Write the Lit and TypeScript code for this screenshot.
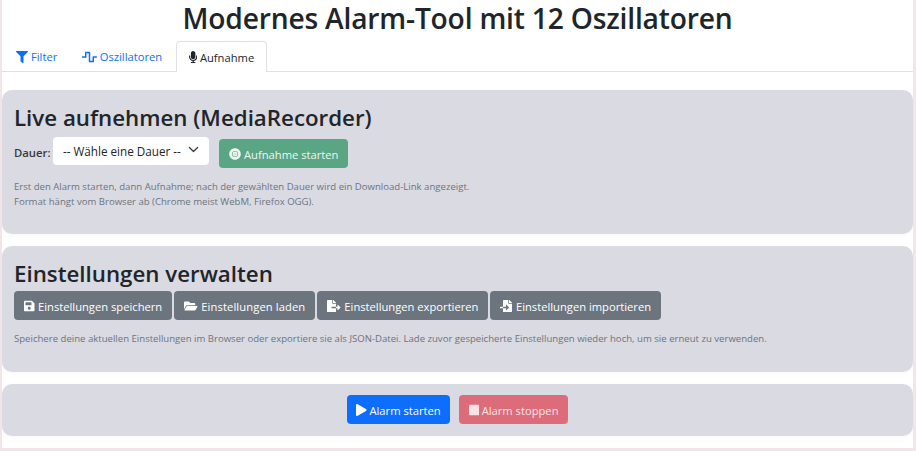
import { LitElement, html, css, svg } from "lit";
import { customElement } from "lit/decorators.js";

const I: Record<string, [number, string]> = {
  filter: [512, "M487.976 0H24.028C2.71 0-8.047 25.866 7.058 40.971L192 225.941V432c0 7.831 3.821 15.17 10.237 19.662l80 55.98C298.02 518.69 320 507.493 320 487.98V225.941l184.947-184.97C520.021 25.896 509.338 0 487.976 0z"],
  wave: [640, "M476 480H324a36 36 0 0 1-36-36V96h-96v156a36 36 0 0 1-36 36H12a12 12 0 0 1-12-12v-40a12 12 0 0 1 12-12h116V68a36 36 0 0 1 36-36h152a36 36 0 0 1 36 36v348h96V260a36 36 0 0 1 36-36h140a12 12 0 0 1 12 12v40a12 12 0 0 1-12 12H512v156a36 36 0 0 1-36 36z"],
  mic: [352, "M176 352c53.02 0 96-42.98 96-96V96c0-53.02-42.98-96-96-96S80 42.98 80 96v160c0 53.02 42.98 96 96 96zm160-160h-16c-8.84 0-16 7.16-16 16v48c0 74.8-64.49 134.82-140.79 127.38C96.71 376.89 48 317.11 48 250.3V208c0-8.84-7.16-16-16-16H16c-8.84 0-16 7.16-16 16v40.16c0 89.64 63.97 169.55 152 181.69V464H96c-8.84 0-16 7.16-16 16v16c0 8.84 7.16 16 16 16h160c8.84 0 16-7.16 16-16v-16c0-8.84-7.16-16-16-16h-56v-33.77C285.71 418.47 352 344.9 352 256v-48c0-8.84-7.16-16-16-16z"],
  vinyl: [512, "M256 152a104 104 0 1 0 104 104 104 104 0 0 0-104-104zm0 128a24 24 0 1 1 24-24 24 24 0 0 1-24 24zm0-272C119 8 8 119 8 256s111 248 248 248 248-111 248-248S393 8 256 8zm0 376a128 128 0 1 1 128-128 128 128 0 0 1-128 128z"],
  save: [448, "M433.941 129.941l-83.882-83.882A48 48 0 0 0 316.118 32H48C21.49 32 0 53.49 0 80v352c0 26.51 21.49 48 48 48h352c26.51 0 48-21.49 48-48V163.882a48 48 0 0 0-14.059-33.941zM224 416c-35.346 0-64-28.654-64-64 0-35.346 28.654-64 64-64s64 28.654 64 64c0 35.346-28.654 64-64 64zm96-304.52V212c0 6.627-5.373 12-12 12H76c-6.627 0-12-5.373-12-12V108c0-6.627 5.373-12 12-12h228.52c3.183 0 6.235 1.264 8.485 3.515l3.48 3.48A11.996 11.996 0 0 1 320 111.48z"],
  folder: [576, "M572.694 292.093L500.27 416.248A63.997 63.997 0 0 1 444.989 448H45.025c-18.523 0-30.064-20.093-20.731-36.093l72.424-124.155A64 64 0 0 1 152 256h399.964c18.523 0 30.064 20.093 20.73 36.093zM152 224h328v-48c0-26.51-21.49-48-48-48H272l-64-64H48C21.49 64 0 85.49 0 112v278.046l69.077-118.418C86.214 242.25 117.989 224 152 224z"],
  fexport: [576, "M384 121.9c0-6.3-2.5-12.4-7-16.9L279.1 7c-4.5-4.5-10.6-7-17-7H256v128h128zM571 308l-95.7-96.4c-10.1-10.1-27.4-3-27.4 11.3V288h-64v64h64v65.2c0 14.3 17.3 21.4 27.4 11.3L571 332c6.6-6.6 6.6-17.4 0-24zm-379 28v-32c0-8.8 7.2-16 16-16h176V160H248c-13.2 0-24-10.8-24-24V0H24C10.7 0 0 10.7 0 24v464c0 13.3 10.7 24 24 24h336c13.3 0 24-10.7 24-24V352H208c-8.8 0-16-7.2-16-16z"],
  fimport: [512, "M16 288c-8.8 0-16 7.2-16 16v32c0 8.8 7.2 16 16 16h112v-64zm489-183L407.1 7c-4.5-4.5-10.6-7-17-7H384v128h128v-6.1c0-6.3-2.5-12.4-7-16.9zm-153 31V0H152c-13.3 0-24 10.7-24 24v264h128v-65.2c0-14.3 17.3-21.4 27.4-11.3L379 308c6.6 6.7 6.6 17.4 0 24l-95.7 96.4c-10.1 10.1-27.4 3-27.4-11.3V352H128v136c0 13.3 10.7 24 24 24h336c13.3 0 24-10.7 24-24V160H376c-13.2 0-24-10.8-24-24z"],
  play: [448, "M424.4 214.7L72.4 6.6C43.8-10.3 0 6.1 0 47.9V464c0 37.5 40.7 60.1 72.4 41.3l352-208c31.4-18.5 31.5-64.1 0-82.6z"],
  stop: [448, "M400 32H48C21.5 32 0 53.5 0 80v352c0 26.5 21.5 48 48 48h352c26.5 0 48-21.5 48-48V80c0-26.5-21.5-48-48-48z"],
};

const icon = (n: string) => {
  const [w, d] = I[n];
  return html`<svg class="ic" viewBox="0 0 ${w} 512" style="width:${(w / 512) * 12}px">${svg`<path fill="currentColor" d=${d}></path>`}</svg>`;
};

@customElement("app-root")
export class AppRoot extends LitElement {
  static styles = css`
    :host {
      display: block;
      height: 451px;
      box-sizing: border-box;
      padding: 0 3px 3px 2px;
      background: #f1e5e9;
      font-family: "Open Sans", "Noto Sans", sans-serif;
      color: #212529;
      overflow: hidden;
    }
    .page {
      height: 100%;
      background: #fff;
      overflow: hidden;
    }
    h1 {
      margin: 0;
      height: 41px;
      box-sizing: border-box;
      line-height: 36px;
      text-align: center;
      font-size: 28.2px;
      font-weight: 600;
      letter-spacing: -0.2px;
    }
    .tabs {
      display: flex;
      height: 31px;
      box-sizing: border-box;
      border-bottom: 1px solid #dee2e6;
      margin-bottom: 18px;
      font-size: 11.2px;
    }
    .tab {
      display: flex;
      align-items: center;
      gap: 3.5px;
      height: 30px;
      padding: 0 12.5px;
      color: #0d6efd;
      border: 1px solid transparent;
      border-bottom: none;
      box-sizing: border-box;
    }
    .tab:first-child { padding-right: 10px; }
    .tab:nth-child(2) { gap: 3px; padding-right: 13px; }
    .tab.active {
      height: 31px;
      color: #212529;
      background: #fff;
      border-color: #dee2e6;
      border-radius: 4px 4px 0 0;
      padding: 0 11.5px;
      gap: 3px;
    }
    .ic { height: 12px; flex: none; display: block; }
    .panel {
      background: #dadae3;
      border-radius: 10px;
      box-shadow: 0 2px 6px rgba(0, 0, 0, 0.03);
      padding: 13px 12px 0;
      margin-bottom: 12px;
      box-sizing: border-box;
    }
    .p1 { height: 144px; }
    .p2 { height: 126px; }
    .p3 { height: 52px; padding: 0; display: flex; align-items: center; justify-content: center; gap: 9px; }
    h2 {
      margin: 0;
      font-size: 22.3px;
      line-height: 30px;
      font-weight: 600;
    }
    .row { display: flex; align-items: center; }
    .rec { margin-top: 4px; height: 30px; }
    label { font-size: 11.3px; font-weight: 600; color: #343a40; margin-right: 2px; }
    .select {
      display: flex;
      align-items: center;
      justify-content: space-between;
      box-sizing: border-box;
      width: 156px;
      height: 28px;
      margin-top: -3px;
      padding: 1px 10px 0 10.5px;
      background: #fff;
      border-radius: 4px;
      font-size: 11.7px;
    }
    .select svg { width: 11px; height: 11px; margin-top: -3px; }
    .btn {
      display: inline-flex;
      align-items: center;
      gap: 3.5px;
      height: 29px;
      box-sizing: border-box;
      padding: 1px 10px 0;
      border-radius: 4px;
      color: #fff;
      font-size: 11.2px;
      white-space: nowrap;
    }
    .green { background: #5aa684; color: #eef5f1; margin-left: 10px; margin-top: 3px; }
    .grey { background: #6c757d; }
    .grey.wide { letter-spacing: 0.11px; }
    .blue { background: #0d6efd; padding: 1px 9.5px 0; gap: 2.5px; }
    .red { background: #dc6c7a; color: #f8e4e6; padding: 1px 9.5px 0; gap: 2.5px; }
    .p3 .btn { margin-top: -1px; }
    .gap { gap: 2px; margin-top: 2px; }
    p {
      margin: 0;
      font-size: 9.58px;
      line-height: 14.5px;
      color: #6c757d;
    }
    .rec + p { margin-top: 13px; }
    .gap + p { margin-top: 12px; }
  `;

  render() {
    return html`<div class="page">
      <h1>Modernes Alarm-Tool mit 12 Oszillatoren</h1>
      <nav class="tabs">
        <div class="tab">${icon("filter")}Filter</div>
        <div class="tab">${icon("wave")}Oszillatoren</div>
        <div class="tab active">${icon("mic")}Aufnahme</div>
      </nav>
      <section class="panel p1">
        <h2>Live aufnehmen (MediaRecorder)</h2>
        <div class="row rec">
          <label>Dauer:</label>
          <div class="select">
            <span>-- Wähle eine Dauer --</span>
            <svg viewBox="0 0 16 16"><path fill="none" stroke="#343a40" stroke-linecap="round" stroke-linejoin="round" stroke-width="1.8" d="M2 5l6 6 6-6"></path></svg>
          </div>
          <div class="btn green">${icon("vinyl")}Aufnahme starten</div>
        </div>
        <p>Erst den Alarm starten, dann Aufnahme; nach der gewählten Dauer wird ein Download-Link angezeigt.<br />Format hängt vom Browser ab (Chrome meist WebM, Firefox OGG).</p>
      </section>
      <section class="panel p2">
        <h2>Einstellungen verwalten</h2>
        <div class="row gap">
          <div class="btn grey">${icon("save")}Einstellungen speichern</div>
          <div class="btn grey wide">${icon("folder")}Einstellungen laden</div>
          <div class="btn grey">${icon("fexport")}Einstellungen exportieren</div>
          <div class="btn grey">${icon("fimport")}Einstellungen importieren</div>
        </div>
        <p>Speichere deine aktuellen Einstellungen im Browser oder exportiere sie als JSON-Datei. Lade zuvor gespeicherte Einstellungen wieder hoch, um sie erneut zu verwenden.</p>
      </section>
      <section class="panel p3">
        <div class="btn blue">${icon("play")}Alarm starten</div>
        <div class="btn red">${icon("stop")}Alarm stoppen</div>
      </section>
    </div>`;
  }
}
